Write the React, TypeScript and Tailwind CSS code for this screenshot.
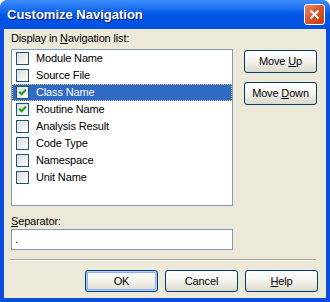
import React from 'react'

const items = [
  { label: 'Module Name', checked: false },
  { label: 'Source File', checked: false },
  { label: 'Class Name', checked: true, selected: true },
  { label: 'Routine Name', checked: true },
  { label: 'Analysis Result', checked: false },
  { label: 'Code Type', checked: false },
  { label: 'Namespace', checked: false },
  { label: 'Unit Name', checked: false },
]

const font = "font-['Tahoma','Liberation_Sans',sans-serif] text-[11px] tracking-[-0.15px]"

function Checkbox({ checked }: { checked: boolean }) {
  return (
    <div className="w-[13px] h-[13px] shrink-0 border border-[#1C5180] bg-gradient-to-br from-[#DCDCD7] to-white flex items-center justify-center">
      {checked && (
        <svg width="9" height="9" viewBox="0 0 9 9">
          <path d="M1.2 3.8 L3.5 6.2 L7.8 1.8" stroke="#21A121" strokeWidth="2.2" fill="none" />
        </svg>
      )}
    </div>
  )
}

function XpButton({ children, isDefault, short }: { children: React.ReactNode; isDefault?: boolean; short?: boolean }) {
  return (
    <button
      className={
        'w-[73px] rounded-[3px] border border-[#003C74] bg-gradient-to-b from-white via-[#F4F3EE] to-[#DCD8CB] text-black flex items-center justify-center ' +
        (short ? 'h-[22px] ' : 'h-[23px] ') +
        (isDefault ? 'shadow-[inset_0_0_0_1px_#B9D1FA,inset_0_0_0_2px_#8AADF4]' : '')
      }
    >
      <span>{children}</span>
    </button>
  )
}

export default function App() {
  return (
    <div className={`w-[330px] h-[302px] flex flex-col bg-[#0A4BE0] rounded-t-[8px] overflow-hidden ${font}`}>
      {/* Title bar */}
      <div className="h-[29px] shrink-0 flex items-center justify-between pl-[7px] pr-[5px] bg-gradient-to-b from-[#3D8FFA] via-[#0058E8] to-[#0050E0]">
        <span className="font-['Trebuchet_MS','Liberation_Sans',sans-serif] font-bold text-[13px] tracking-normal text-white [text-shadow:1px_1px_0_#0A1883]">
          Customize Navigation
        </span>
        <div className="w-[21px] h-[21px] rounded-[3px] border border-white bg-gradient-to-br from-[#E8896A] via-[#D9552C] to-[#C43D12] flex items-center justify-center">
          <svg width="11" height="11" viewBox="0 0 11 11">
            <path d="M1.5 1.5 L9.5 9.5 M9.5 1.5 L1.5 9.5" stroke="white" strokeWidth="2" />
          </svg>
        </div>
      </div>

      {/* Body */}
      <div className="flex-1 mx-[4px] mb-[4px] bg-[#ECE9D8] flex flex-col pl-[7px] pr-[8px] pt-[3px] text-black">
        <div className="flex justify-between">
          <div className="flex flex-col w-[222px]">
            <div className="h-[13px] leading-[13px]">
              Display in <u>N</u>avigation list:
            </div>
            <div className="mt-[4px] h-[157px] border border-[#7F9DB9] bg-white">
              {items.map((it) => (
                <div
                  key={it.label}
                  className={
                    'h-[17px] flex items-center gap-[7px] pl-[4px] ' +
                    (it.selected ? 'bg-[#316AC5] text-white outline outline-1 outline-dotted outline-[#E8C87A] -outline-offset-1' : '')
                  }
                >
                  <Checkbox checked={it.checked} />
                  <span className="leading-[13px]">{it.label}</span>
                </div>
              ))}
            </div>
          </div>
          <div className="flex flex-col gap-[9px] pt-[18px] mr-[1px]">
            <XpButton>
              Move <u>U</u>p
            </XpButton>
            <XpButton>
              Move <u>D</u>own
            </XpButton>
          </div>
        </div>

        <div className="mt-[9px] h-[13px] leading-[13px]">
          <u>S</u>eparator:
        </div>
        <div className="mt-[1px] w-[222px] h-[21px] border border-[#7F9DB9] bg-white flex items-center pl-[3px] leading-none">
          .
        </div>

        <div className="mt-[9px] -ml-[1px] mr-[2px] border-t border-[#ACA899] border-b border-b-white" />

        <div className="mt-[9px] flex justify-end gap-[7px]">
          <XpButton isDefault short>OK</XpButton>
          <XpButton short>Cancel</XpButton>
          <XpButton short>
            <u>H</u>elp
          </XpButton>
        </div>
      </div>
    </div>
  )
}
